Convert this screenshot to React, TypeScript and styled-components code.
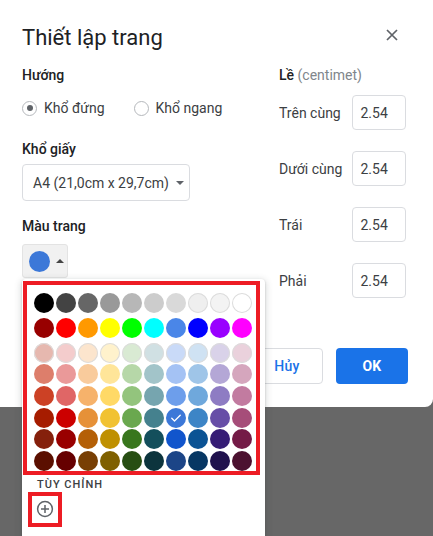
import React from 'react';
import styled, { createGlobalStyle } from 'styled-components';

const GlobalStyle = createGlobalStyle`
  html, body { margin: 0; padding: 0; }
  body {
    background: #676767;
    width: 433px;
    height: 536px;
    overflow: hidden;
    font-family: Roboto, "Noto Sans", "Liberation Sans", Arial, sans-serif;
    -webkit-font-smoothing: antialiased;
  }
  * { box-sizing: border-box; }
`;

const Dialog = styled.div`
  position: relative;
  width: 433px;
  background: #fff;
  padding: 24px 25px 23px 22px;
  border-bottom-right-radius: 8px;
`;

const Header = styled.div`
  display: flex;
  justify-content: space-between;
  align-items: flex-start;
  height: 28px;
`;

const Title = styled.h1`
  margin: 0;
  font-size: 22px;
  line-height: 28px;
  font-weight: 400;
  color: #202124;
`;

const CloseButton = styled.div`
  width: 24px;
  height: 24px;
  margin-top: -1.5px;
  margin-right: 4px;
  display: flex;
  align-items: center;
  justify-content: center;
`;

const Body = styled.div`
  display: flex;
  margin-top: 13px;
`;

const LeftCol = styled.div`
  width: 257px;
  display: flex;
  flex-direction: column;
  align-items: flex-start;
`;

const RightCol = styled.div`
  flex: 1;
  display: flex;
  flex-direction: column;
`;

const SectionLabel = styled.div<{ $mt?: number }>`
  font-size: 14px;
  line-height: 20px;
  font-weight: 500;
  color: #202124;
  margin-top: ${p => p.$mt ?? 0}px;
`;

const Muted = styled.span`
  font-weight: 400;
  color: #80868b;
`;

const RadioRow = styled.div`
  display: flex;
  align-items: center;
  height: 20px;
  margin-top: 13px;
  gap: 29px;
`;

const RadioItem = styled.label`
  display: flex;
  align-items: center;
  gap: 7px;
  font-size: 14px;
  color: #3c4043;
`;

const RadioCircle = styled.span<{ $checked?: boolean }>`
  width: 15px;
  height: 15px;
  border-radius: 50%;
  border: 1.5px solid #b5b8bc;
  display: flex;
  align-items: center;
  justify-content: center;
  &::after {
    content: '';
    width: 6px;
    height: 6px;
    border-radius: 50%;
    background: ${p => (p.$checked ? '#5f6368' : 'transparent')};
  }
`;

const Select = styled.div`
  margin-top: 5px;
  width: 168px;
  height: 37px;
  border: 1px solid #dadce0;
  border-radius: 4px;
  display: flex;
  align-items: center;
  padding-left: 10px;
  gap: 7px;
  font-size: 14px;
  color: #3c4043;
`;

const DownArrow = styled.span`
  width: 0;
  height: 0;
  border-left: 4px solid transparent;
  border-right: 4px solid transparent;
  border-top: 4px solid #5f6368;
`;

const ColorButton = styled.div`
  margin-top: 8px;
  width: 46px;
  height: 34px;
  background: #f1f1f1;
  border: 1px solid #e3e3e3;
  border-radius: 3px;
  display: flex;
  align-items: center;
  padding-left: 6px;
  gap: 6px;
`;

const Swatch = styled.span<{ $color: string }>`
  width: 21px;
  height: 21px;
  border-radius: 50%;
  background: ${p => p.$color};
`;

const UpArrow = styled.span`
  width: 0;
  height: 0;
  border-left: 4px solid transparent;
  border-right: 4px solid transparent;
  border-bottom: 4px solid #444;
`;

const MarginList = styled.div`
  display: flex;
  flex-direction: column;
  gap: 21px;
  margin-top: 10px;
`;

const MarginRow = styled.div`
  display: flex;
  align-items: center;
  height: 35px;
`;

const MarginLabel = styled.span`
  width: 72.5px;
  font-size: 14px;
  color: #3c4043;
`;

const MarginInput = styled.div`
  width: 54px;
  height: 35px;
  border: 1px solid #dadce0;
  border-radius: 4px;
  display: flex;
  align-items: center;
  padding-left: 8px;
  font-size: 14px;
  color: #3c4043;
`;

const Footer = styled.div`
  display: flex;
  justify-content: flex-end;
  gap: 13px;
  margin-top: 50px;
`;

const Button = styled.div<{ $primary?: boolean }>`
  width: 72px;
  height: 36px;
  border-radius: 4px;
  display: flex;
  align-items: center;
  justify-content: center;
  font-size: 14px;
  font-weight: ${p => (p.$primary ? 700 : 500)};
  letter-spacing: 0.25px;
  background: ${p => (p.$primary ? '#1a73e8' : '#fff')};
  color: ${p => (p.$primary ? '#fff' : '#1a73e8')};
  border: ${p => (p.$primary ? 'none' : '1px solid #dadce0')};
`;

const Popup = styled.div`
  position: absolute;
  left: 22px;
  top: 279px;
  width: 243px;
  height: 270px;
  background: #fff;
  border-radius: 4px;
  box-shadow: 0 1px 2px rgba(60, 64, 67, 0.3), 0 2px 6px 2px rgba(60, 64, 67, 0.15);
  padding: 2px 5px 0 1px;
  display: flex;
  flex-direction: column;
  align-items: flex-start;
`;

const RedFrame = styled.div`
  border: 4px solid #ed1c24;
`;

const PaletteFrame = styled(RedFrame)`
  width: 237px;
  padding: 7.5px 3px 0 6.5px;
  display: flex;
  flex-direction: column;
  gap: 5px;
`;

const Grid = styled.div`
  display: grid;
  grid-template-columns: repeat(10, 20px);
  column-gap: 2.1px;
  row-gap: 1.7px;
`;

const Dot = styled.div<{ $color: string; $light: boolean }>`
  width: 20px;
  height: 20px;
  border-radius: 50%;
  background: ${p => p.$color};
  box-shadow: ${p => (p.$light ? 'inset 0 0 0 1px #dcdcdc' : 'none')};
  display: flex;
  align-items: center;
  justify-content: center;
`;

const CustomLabel = styled.div`
  margin-top: 2px;
  margin-left: 14px;
  font-size: 11px;
  line-height: 16px;
  font-weight: 500;
  letter-spacing: 1px;
  color: #3c4043;
`;

const PlusFrame = styled(RedFrame)`
  margin-left: 4.7px;
  margin-top: -1px;
  width: 34px;
  height: 35px;
  display: flex;
  align-items: center;
  justify-content: center;
`;

const rows: string[][] = [
  ['#000000', '#434343', '#666666', '#999999', '#b7b7b7', '#cccccc', '#d9d9d9', '#efefef', '#f3f3f3', '#ffffff'],
  ['#980000', '#ff0000', '#ff9900', '#ffff00', '#00ff00', '#00ffff', '#4a86e8', '#0000ff', '#9900ff', '#ff00ff'],
  ['#e6b8af', '#f4cccc', '#fce5cd', '#fff2cc', '#d9ead3', '#d0e0e3', '#c9daf8', '#cfe2f3', '#d9d2e9', '#ead1dc'],
  ['#dd7e6b', '#ea9999', '#f9cb9c', '#ffe599', '#b6d7a8', '#a2c4c9', '#a4c2f4', '#9fc5e8', '#b4a7d6', '#d5a6bd'],
  ['#cc4125', '#e06666', '#f6b26b', '#ffd966', '#93c47d', '#76a5af', '#6d9eeb', '#6fa8dc', '#8e7cc3', '#c27ba0'],
  ['#a61c00', '#cc0000', '#e69138', '#f1c232', '#6aa84f', '#45818e', '#3c78d8', '#3d85c6', '#674ea7', '#a64d79'],
  ['#85200c', '#990000', '#b45f06', '#bf9000', '#38761d', '#134f5c', '#1155cc', '#0b5394', '#351c75', '#741b47'],
  ['#5b0f00', '#660000', '#783f04', '#7f6000', '#274e13', '#0c343d', '#1c4587', '#073763', '#20124d', '#4c1130'],
];

const lightSet = new Set(['#efefef', '#f3f3f3', '#ffffff', '#fce5cd', '#fff2cc', '#d9ead3', '#cfe2f3', '#f4cccc', '#e6b8af', '#c9daf8', '#d0e0e3', '#d9d2e9', '#ead1dc']);
const selected = '#3c78d8';

const Check = () => (
  <svg width="12" height="12" viewBox="0 0 24 24">
    <path d="M3.5 12.5l5.5 5.5L20.5 6.5" fill="none" stroke="#fff" strokeWidth="2.6" strokeLinecap="round" strokeLinejoin="round" />
  </svg>
);

const renderGrid = (group: string[][]) => (
  <Grid>
    {group.flat().map((c, i) => (
      <Dot key={i} $color={c} $light={lightSet.has(c)}>
        {c === selected && <Check />}
      </Dot>
    ))}
  </Grid>
);

const margins = [
  ['Trên cùng', '2.54'],
  ['Dưới cùng', '2.54'],
  ['Trái', '2.54'],
  ['Phải', '2.54'],
];

export default function App() {
  return (
    <>
      <GlobalStyle />
      <Dialog>
        <Header>
          <Title>Thiết lập trang</Title>
          <CloseButton>
            <svg width="12" height="12" viewBox="0 0 12 12">
              <path d="M1 1L11 11M11 1L1 11" stroke="#5f6368" strokeWidth="1.7" />
            </svg>
          </CloseButton>
        </Header>
        <Body>
          <LeftCol>
            <SectionLabel>Hướng</SectionLabel>
            <RadioRow>
              <RadioItem>
                <RadioCircle $checked />
                Khổ đứng
              </RadioItem>
              <RadioItem>
                <RadioCircle />
                Khổ ngang
              </RadioItem>
            </RadioRow>
            <SectionLabel $mt={21}>Khổ giấy</SectionLabel>
            <Select>
              A4 (21,0cm x 29,7cm)
              <DownArrow />
            </Select>
            <SectionLabel $mt={15}>Màu trang</SectionLabel>
            <ColorButton>
              <Swatch $color="#3c78d8" />
              <UpArrow />
            </ColorButton>
          </LeftCol>
          <RightCol>
            <SectionLabel>
              Lề <Muted>(centimet)</Muted>
            </SectionLabel>
            <MarginList>
              {margins.map(([l, v]) => (
                <MarginRow key={l}>
                  <MarginLabel>{l}</MarginLabel>
                  <MarginInput>{v}</MarginInput>
                </MarginRow>
              ))}
            </MarginList>
          </RightCol>
        </Body>
        <Footer>
          <Button>Hủy</Button>
          <Button $primary>OK</Button>
        </Footer>
        <Popup>
          <PaletteFrame>
            {renderGrid([rows[0]])}
            {renderGrid([rows[1]])}
            {renderGrid(rows.slice(2))}
          </PaletteFrame>
          <CustomLabel>TÙY CHỈNH</CustomLabel>
          <PlusFrame>
            <svg width="18" height="18" viewBox="0 0 18 18">
              <circle cx="9" cy="9" r="7.4" fill="none" stroke="#5f6368" strokeWidth="1.5" />
              <path d="M9 5v8M5 9h8" stroke="#5f6368" strokeWidth="1.5" />
            </svg>
          </PlusFrame>
        </Popup>
      </Dialog>
    </>
  );
}
